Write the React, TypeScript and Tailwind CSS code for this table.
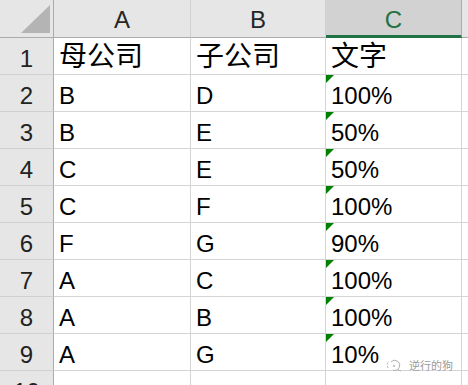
import React from "react";

const rows: [string, string, string, string, boolean][] = [
  ["1", "母公司", "子公司", "文字", false],
  ["2", "B", "D", "100%", true],
  ["3", "B", "E", "50%", true],
  ["4", "C", "E", "50%", true],
  ["5", "C", "F", "100%", true],
  ["6", "F", "G", "90%", true],
  ["7", "A", "C", "100%", true],
  ["8", "A", "B", "100%", true],
  ["9", "A", "G", "10%", true],
];

const isCJK = (s: string) => /[\u4e00-\u9fff]/.test(s);

function Txt({ s }: { s: string }) {
  return isCJK(s) ? <span className="text-[28px]">{s}</span> : <span>{s}</span>;
}

export default function App() {
  return (
    <div className="relative w-[468px] h-[385px] overflow-hidden bg-white text-[24px] leading-none text-black font-['Liberation_Sans','Noto_Sans_CJK_SC',sans-serif]">
      <div className="grid grid-cols-[54px_137px_135px_136px_1fr] auto-rows-[37px] grid-rows-[38px]">
        {/* header row */}
        <div className="relative bg-[#e6e6e6] border-r border-b border-r-[#ababab] border-b-[#ababab]">
          <div className="absolute left-[21px] top-[5px] w-0 h-0 border-b-[28px] border-l-[29px] border-b-[#b4b4b4] border-l-transparent" />
        </div>
        <div className="flex items-end justify-center pb-[5px] bg-[#e6e6e6] border-r border-b border-r-[#d0d0d0] border-b-[#ababab] text-[#262626]">A</div>
        <div className="flex items-end justify-center pb-[5px] bg-[#e6e6e6] border-r border-b border-r-[#d0d0d0] border-b-[#ababab] text-[#262626]">B</div>
        <div className="flex items-end justify-center pb-[3px] bg-[#d2d2d2] border-r border-b-[3px] border-r-[#ababab] border-b-[#217346] text-[#217346]">C</div>
        <div className="bg-[#e6e6e6] border-b border-b-[#ababab]" />

        {rows.map(([n, a, b, c, tri]) => (
          <React.Fragment key={n}>
            <div className="flex items-end justify-center pb-[3px] bg-[#e6e6e6] border-r border-b border-r-[#ababab] border-b-[#d0d0d0] text-[#222]">{n}</div>
            <div className="flex items-end pl-[5px] pb-[3px] border-r border-b border-[#d4d4d4]"><Txt s={a} /></div>
            <div className="flex items-end pl-[5px] pb-[3px] border-r border-b border-[#d4d4d4]"><Txt s={b} /></div>
            <div className="relative flex items-end pl-[5px] pb-[3px] border-r border-b border-[#d4d4d4]">
              {tri && <div className="absolute top-0 left-0 w-0 h-0 border-t-[8px] border-r-[8px] border-t-[#008000] border-r-transparent" />}
              <Txt s={c} />
            </div>
            <div className="border-b border-[#d4d4d4]" />
          </React.Fragment>
        ))}

        <div className="flex items-end justify-center pb-[3px] bg-[#e6e6e6] border-r border-b border-r-[#ababab] border-b-[#d0d0d0] text-[#222]">10</div>
        <div className="border-r border-b border-[#d4d4d4]" />
        <div className="border-r border-b border-[#d4d4d4]" />
        <div className="border-r border-b border-[#d4d4d4]" />
        <div className="border-b border-[#d4d4d4]" />
      </div>

      {/* watermark */}
      <div className="absolute left-[385px] top-[358px] flex items-center gap-[6px] text-[11px] leading-none text-[#9a9a9a] font-['Noto_Sans_CJK_SC',sans-serif] [text-shadow:0_0_2px_#fff,0_0_1px_#fff]">
        <svg width="18" height="14" viewBox="0 0 18 14" fill="none" stroke="#b0b0b0" strokeWidth="1">
          <path d="M3 10 A6 6 0 0 1 4 3" strokeDasharray="2 1.5" />
          <path d="M6 4 A5 5 0 1 1 8 12" />
          <circle cx="9" cy="8" r="1" fill="#b0b0b0" stroke="none" />
          <path d="M13 12 L16 13" />
        </svg>
        <span>逆行的狗</span>
      </div>
    </div>
  );
}
